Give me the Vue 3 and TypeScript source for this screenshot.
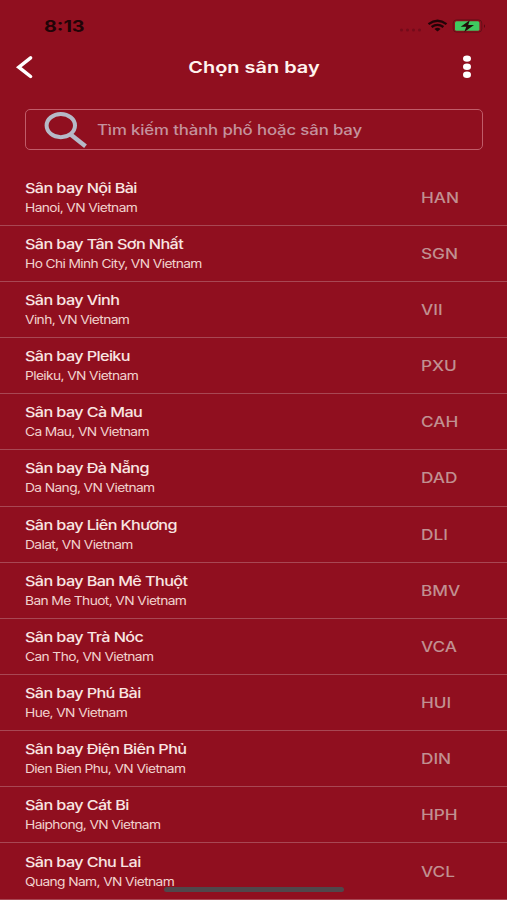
<script setup lang="ts">
interface Airport {
  name: string
  place: string
  code: string
}

const airports: Airport[] = [
  { name: 'Sân bay Nội Bài', place: 'Hanoi, VN Vietnam', code: 'HAN' },
  { name: 'Sân bay Tân Sơn Nhất', place: 'Ho Chi Minh City, VN Vietnam', code: 'SGN' },
  { name: 'Sân bay Vinh', place: 'Vinh, VN Vietnam', code: 'VII' },
  { name: 'Sân bay Pleiku', place: 'Pleiku, VN Vietnam', code: 'PXU' },
  { name: 'Sân bay Cà Mau', place: 'Ca Mau, VN Vietnam', code: 'CAH' },
  { name: 'Sân bay Đà Nẵng', place: 'Da Nang, VN Vietnam', code: 'DAD' },
  { name: 'Sân bay Liên Khương', place: 'Dalat, VN Vietnam', code: 'DLI' },
  { name: 'Sân bay Ban Mê Thuột', place: 'Ban Me Thuot, VN Vietnam', code: 'BMV' },
  { name: 'Sân bay Trà Nóc', place: 'Can Tho, VN Vietnam', code: 'VCA' },
  { name: 'Sân bay Phú Bài', place: 'Hue, VN Vietnam', code: 'HUI' },
  { name: 'Sân bay Điện Biên Phủ', place: 'Dien Bien Phu, VN Vietnam', code: 'DIN' },
  { name: 'Sân bay Cát Bi', place: 'Haiphong, VN Vietnam', code: 'HPH' },
  { name: 'Sân bay Chu Lai', place: 'Quang Nam, VN Vietnam', code: 'VCL' },
]
</script>

<template>
  <main class="screen">
    <div class="status">
      <span class="clock">8:13</span>
      <svg class="indicators" width="90" height="20" viewBox="0 0 90 20">
        <g fill="#740b1a">
          <circle cx="5.5" cy="14" r="1.5" />
          <circle cx="11.5" cy="14" r="1.5" />
          <circle cx="17.5" cy="14" r="1.5" />
          <circle cx="23.5" cy="14" r="1.5" />
        </g>
        <g fill="none" stroke="#210407" stroke-width="2.3">
          <path d="M32.5 8.1Q41.5 1.3 50.5 8.1" />
          <path d="M35.6 11Q41.5 6.7 47.4 11" />
        </g>
        <path d="M38.5 12.9Q41.5 10.6 44.5 12.9L41.5 15.6Z" fill="#210407" />
        <rect x="57.2" y="3.9" width="28.6" height="12.2" rx="3.2" fill="none" stroke="#650f18" />
        <rect x="59" y="5.3" width="24.4" height="9.4" rx="1.5" fill="#3fca60" />
        <path d="M73.8 4.2L64.7 10.7H70.3L68.3 15.9L78 8.9H72.2Z" fill="#210d09" />
        <path d="M88 8.2Q90 10 88 12Z" fill="#540814" />
      </svg>
    </div>

    <header class="header">
      <svg class="back" width="20" height="26" viewBox="0 0 20 26">
        <path d="M15.6 3.9L3.8 13.2L15.6 22.5" fill="none" stroke="#fff" stroke-width="3.5" stroke-linecap="round" />
      </svg>
      <h1 class="title">Chọn sân bay</h1>
      <svg class="more" width="12" height="26" viewBox="0 0 12 26" fill="#fff">
        <ellipse cx="6" cy="4.6" rx="4" ry="3.2" />
        <ellipse cx="6" cy="12.7" rx="4" ry="3.2" />
        <ellipse cx="6" cy="20.7" rx="4" ry="3.2" />
      </svg>
    </header>

    <div class="search">
      <svg class="glass" width="46" height="38" viewBox="0 0 46 38" fill="none" stroke="#b6b9c7">
        <ellipse cx="17.8" cy="14.6" rx="14.2" ry="11.6" stroke-width="4" />
        <path d="M28 23.8L42.5 35.3" stroke-width="4.4" />
      </svg>
      <span class="placeholder">Tìm kiếm thành phố hoặc sân bay</span>
    </div>

    <ul class="list">
      <li v-for="airport in airports" :key="airport.code" class="row">
        <div class="info">
          <span class="name">{{ airport.name }}</span>
          <span class="place">{{ airport.place }}</span>
        </div>
        <span class="code">{{ airport.code }}</span>
      </li>
    </ul>
    <div class="home-bar"></div>
  </main>
</template>

<style>
body {
  margin: 0;
  background: #900f1f;
}
</style>

<style scoped>
.screen {
  position: relative;
  box-sizing: border-box;
  width: 507px;
  height: 900px;
  overflow: hidden;
  background: #900f1f;
  font-family: Inter, 'Noto Sans', sans-serif;
  color: #f9e5e2;
}
.status {
  display: flex;
  justify-content: space-between;
  align-items: center;
  height: 52px;
  padding: 0 10px 0 44px;
  box-sizing: border-box;
}
.indicators {
  margin-right: 11px;
}
.clock,
.name,
.place,
.code,
.placeholder {
  display: block;
  width: max-content;
  white-space: nowrap;
  transform-origin: left center;
}
.clock {
  font-size: 16px;
  font-weight: 700;
  line-height: 20px;
  color: #210407;
  transform: scaleX(1.23);
}
.header {
  display: grid;
  grid-template-columns: 20px 1fr 12px;
  align-items: center;
  height: 30px;
  padding: 0 34px 0 15px;
}
.title {
  margin: 0 0 0 12px;
  text-align: center;
  font-size: 16px;
  font-weight: 600;
  line-height: 30px;
  color: #fff3ee;
  transform: scaleX(1.245);
}
.search {
  display: flex;
  align-items: center;
  box-sizing: border-box;
  height: 41px;
  margin: 27px 24px 0 25px;
  padding-left: 17px;
  border: 1.4px solid #c05c69;
  border-radius: 5px;
}
.glass {
  flex: none;
}
.placeholder {
  margin-left: 8px;
  padding-bottom: 1px;
  font-size: 14px;
  font-weight: 500;
  letter-spacing: -0.12px;
  color: #c4929d;
  transform: scaleX(1.2);
}
.list {
  margin: 19.6px 0 0;
  padding: 0;
  list-style: none;
}
.row {
  display: grid;
  grid-template-columns: 396px 1fr;
  align-items: center;
  box-sizing: border-box;
  height: 56.17px;
  padding-left: 25px;
  border-bottom: 1px solid #a84753;
}
.info {
  padding-top: 1.4px;
}
.name {
  font-size: 13.5px;
  font-weight: 500;
  line-height: 20px;
  letter-spacing: -0.5px;
  transform: scaleX(1.2);
}
.place {
  font-size: 11.5px;
  line-height: 20.4px;
  letter-spacing: -0.52px;
  color: #f1d2ce;
  transform: scaleX(1.2);
}
.code {
  padding-top: 1px;
  font-size: 14px;
  font-weight: 500;
  line-height: 20px;
  color: #c19091;
  transform: scaleX(1.23);
}
.home-bar {
  position: absolute;
  left: 164px;
  top: 887px;
  width: 180px;
  height: 5px;
  border-radius: 3px;
  background: #51474b;
}
</style>
